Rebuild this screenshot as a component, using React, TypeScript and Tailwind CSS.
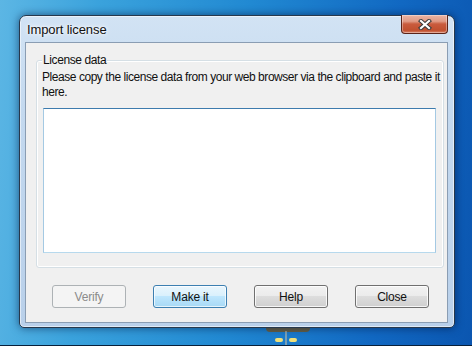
import React from 'react';

const font = { fontFamily: '"Liberation Sans", Arial, sans-serif' };

const Btn = ({ label, kind }: { label: string; kind?: 'default' | 'disabled' }) => {
  const base =
    'w-[74px] h-[23px] rounded-[3px] border text-[12px] tracking-[-0.2px] flex items-center justify-center';
  if (kind === 'disabled')
    return (
      <div className={`${base} border-[#adb2b5] bg-[#f4f4f4] text-[#8b8b8b]`}>{label}</div>
    );
  if (kind === 'default')
    return (
      <div
        className={`${base} border-[#3c7fb1] text-[#111] bg-[linear-gradient(#eaf6fd_0%,#d9f0fc_49%,#bee6fd_50%,#a7d9f5_100%)] shadow-[inset_0_0_0_1px_rgba(255,255,255,0.7)]`}
      >
        {label}
      </div>
    );
  return (
    <div
      className={`${base} border-[#707070] text-[#111] bg-[linear-gradient(#f2f2f2_0%,#ebebeb_49%,#dddddd_50%,#cfcfcf_100%)] shadow-[inset_0_0_0_1px_rgba(255,255,255,0.8)]`}
    >
      {label}
    </div>
  );
};

export default function App() {
  return (
    <div
      style={font}
      className="relative w-[472px] h-[346px] overflow-hidden pt-[15px] pl-[19px] bg-[linear-gradient(95deg,#5cb6e4_0%,#3aa2dc_20%,#2189d2_50%,#1168c2_80%,#0b56b0_100%)] border-b border-[#08203a]"
    >
      {/* desktop bits under the window */}
      <div className="absolute left-[266px] top-[328px] w-[44px] h-[4px] rounded-b-full bg-[#7a5a22] opacity-80" />
      <div className="absolute left-[275px] top-[338px] w-[8px] h-[4px] rounded-full bg-[#f0e07a]" />
      <div className="absolute left-[289px] top-[338px] w-[8px] h-[4px] rounded-full bg-[#f0e07a]" />
      <div className="absolute left-[285px] top-[331px] w-[2px] h-[15px] bg-[#b9b9a8] opacity-60" />

      <div className="relative w-[436px] h-[313px] flex flex-col rounded-t-[7px] rounded-b-[5px] border border-[#27384c] bg-[linear-gradient(180deg,#d2e3f4_0%,#c4d9ef_30%,#b9d0ea_100%)] shadow-[0_0_9px_rgba(0,20,60,0.6),inset_0_0_0_1px_rgba(255,255,255,0.55)]">
        <div className="h-[26px] pl-[7px] pt-[7px] text-[13px] leading-[14px] tracking-[-0.1px] text-[#111] [text-shadow:0_0_6px_#fff,0_0_3px_#fff]">
          Import license
        </div>

        <div className="absolute right-[6px] top-[-1px] w-[47px] h-[19px] rounded-b-[4px] border border-[#5a2318] border-t-0 bg-[linear-gradient(180deg,#eab4a4_0%,#e09a84_35%,#c95b3d_50%,#c0502f_85%,#d98266_100%)] shadow-[inset_0_0_0_1px_rgba(255,255,255,0.35)] flex items-center justify-center">
          <svg width="14" height="11" viewBox="0 0 14 11">
            <path d="M3 2 L11 9 M11 2 L3 9" stroke="#3a3a3a" strokeWidth="4.2" strokeLinecap="square" />
            <path d="M3 2 L11 9 M11 2 L3 9" stroke="#ffffff" strokeWidth="2.2" strokeLinecap="square" />
          </svg>
        </div>

        <div className="ml-[5px] mr-[6px] mb-[4px] flex-1 border border-[#8a9db3] bg-[#f0f0f0] flex flex-col text-[#111]">
          <div className="relative mt-[17px] ml-[10px] w-[408px] h-[208px] rounded-[3px] border border-[#d5dfe5] shadow-[inset_0_0_0_1px_#ffffff]">
            <div className="absolute left-[5px] top-[-8px] px-[1px] bg-[#f0f0f0] text-[12px] leading-[15px] tracking-[-0.4px]">
              License data
            </div>
            <p className="mt-[9px] ml-[5px] w-[400px] text-[12px] leading-[15px] tracking-[-0.45px]">
              Please copy the license data from your web browser via the clipboard and paste it here.
            </p>
            <div className="mt-[8px] ml-[6px] w-[393px] h-[145px] bg-white border border-[#a4c9e3] border-t-[#3d7bad] border-b-[#b7d9ed]" />
          </div>

          <div className="mt-[17px] ml-[26px] flex gap-[27px]">
            <Btn label="Verify" kind="disabled" />
            <Btn label="Make it" kind="default" />
            <Btn label="Help" />
            <Btn label="Close" />
          </div>
        </div>
      </div>
    </div>
  );
}
